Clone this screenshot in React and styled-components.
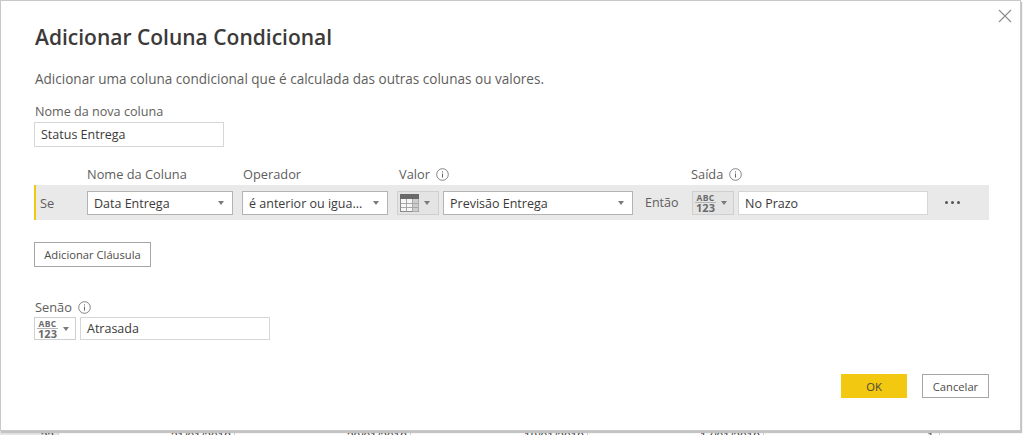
import React from "react";
import styled, { createGlobalStyle } from "styled-components";

const Global = createGlobalStyle`
  html, body { margin: 0; padding: 0; background: #fff; }
  body { width: 1024px; height: 435px; overflow: hidden; font-family: "Open Sans", "Noto Sans", sans-serif; color: #605e5c; }
`;
const Page = styled.div`
  width: 1024px; height: 435px; overflow: hidden; background: #fff;
`;
const Dialog = styled.div`
  position: relative; z-index: 1;
  box-sizing: border-box;
  width: 1021px; height: 431px;
  background: #fff;
  border: 1px solid #c8c8c8;
  padding: 22px 33px 0;
  box-shadow: 1px 2px 1px #c4c4c4;
`;
const Close = styled.button`
  position: absolute; top: 8px; right: 8px;
  width: 14px; height: 14px; padding: 0; border: 0; background: none; display: block;
  svg { display: block; }
`;
const Title = styled.h1`
  margin: 0; padding-left: 1px; font-size: 21px; line-height: 28px; font-weight: 600; color: #3b3a39;
`;
const Desc = styled.p`
  margin: 18px 0 0; padding-left: 1px; font-size: 13.55px; line-height: 20px; color: #605e5c;
`;
const Label = styled.div`
  display: flex; align-items: center; gap: 6px;
  font-size: 12.8px; line-height: 18px; color: #605e5c;
`;
const NameLabel = styled(Label)`margin: 14px 0 1px; padding-left: 1px; font-size: 12.6px;`;
const TextBox = styled.div`
  box-sizing: border-box;
  width: ${p => p.$w}px; height: ${p => p.$h || 25}px;
  background: #fff; border: 1px solid #d6d6d6;
  padding: ${p => p.$drop || 0}px 6px 0; display: flex; align-items: center;
  font-size: 12.5px; color: #3b3a39; white-space: nowrap;
`;
const Columns = styled.div`
  display: flex; margin-top: 17px; padding-left: 53px; height: 20px; align-items: center;
`;
const Col = styled(Label)`width: ${p => p.$w}px; flex: none;`;
const Row = styled.div`
  display: flex; align-items: center;
  box-sizing: border-box;
  width: 955px; height: 35px; margin-top: 1px;
  background: #e9e9e9; border-left: 2px solid #f2c811;
`;
const Se = styled.span`
  width: 51px; flex: none; padding-left: 4px; box-sizing: border-box;
  font-size: 12.8px; color: #605e5c;
`;
const Select = styled.div`
  box-sizing: border-box; flex: none;
  width: ${p => p.$w}px; height: 24px; margin-right: ${p => p.$mr ?? 9}px;
  background: #fff; border: 1px solid #b3b3b3;
  display: flex; align-items: center; justify-content: space-between;
  padding: 1px 8px 0 6px;
  font-size: 12.5px; color: #3b3a39; white-space: nowrap;
`;
const Caret = styled.i`
  display: block; flex: none; width: 0; height: 0;
  border-left: 3.5px solid transparent; border-right: 3.5px solid transparent;
  border-top: 4px solid #7a7a7a;
`;
const TypeButton = styled.div`
  box-sizing: border-box; flex: none;
  width: 42px; height: ${p => p.$h || 24}px; margin-right: 4px;
  background: ${p => p.$bg || "#e4e4e4"}; border: 1px solid #cfcfcf;
  display: flex; align-items: center; gap: 5px; padding-left: 2px;
`;
const Abc = styled.span`
  display: block; width: 21px; font-family: "Open Sans", sans-serif;
  color: #6a6a6a; text-align: center;
  b { display: block; font-weight: 700; font-size: 8.5px; line-height: 9px; letter-spacing: .3px; }
  b + b { font-size: 11px; line-height: 10px; letter-spacing: 0; border-top: 1px solid #b5b5b5; }
`;
const Then = styled.span`
  width: 47px; flex: none; margin-left: 12px; box-sizing: border-box;
  font-size: 12.5px; color: #605e5c;
`;
const More = styled.span`
  margin-left: 17px; display: flex; gap: 3px;
  i { display: block; width: 3px; height: 3px; border-radius: 50%; background: #555; }
`;
const Button = styled.div`
  box-sizing: border-box; width: ${p => p.$w}px; height: ${p => p.$h}px;
  display: flex; align-items: center; justify-content: center;
  background: ${p => p.$primary ? "#f2c811" : "#fff"};
  border: 1px solid ${p => p.$primary ? "#f2c811" : "#a6a6a6"};
  font-size: 11.2px; color: ${p => p.$primary ? "#4a4538" : "#4d4b49"};
`;
const AddButton = styled(Button)`margin-top: 22px;`;
const ElseLabel = styled(Label)`margin-top: 31px; padding-left: 1px;`;
const ElseRow = styled.div`display: flex; align-items: center; margin-top: 1px;`;
const Footer = styled.div`
  position: absolute; right: 31px; bottom: 32px;
  display: flex; gap: 15px;
`;
const Behind = styled.div`
  display: flex; height: 4px; overflow: hidden; background: #fff;
`;
const Cell = styled.div`
  box-sizing: border-box; flex: none; width: ${p => p.$w}px; height: 4px;
  padding-right: ${p => p.$pad ?? 3}px; text-align: right;
  border-right: 1px solid #cfcfcf;
  background: ${p => p.$head ? "#e6e6e6" : "#fff"};
  font-family: "Liberation Sans", sans-serif; font-size: 12px; line-height: 16px; color: #333;
  span { display: block; margin-top: -2px; }
`;

const Info = () => (
  <svg width="13" height="13" viewBox="0 0 13 13" fill="none" stroke="#666">
    <circle cx="6.5" cy="6.5" r="5.8" strokeWidth=".8" />
    <path d="M6.5 5.6V9.6M6.5 3.4v1.1" strokeWidth="1" />
  </svg>
);
const TableIcon = () => (
  <svg width="19" height="18" viewBox="0 0 19 18">
    <rect x=".5" y=".5" width="18" height="17" fill="#f6f6f6" stroke="#8a8a8a" />
    <rect x="13" y="5" width="5.5" height="12.5" fill="#cdcdcd" />
    <rect x="0" y="0" width="19" height="5" fill="#6a6a6a" />
    <path d="M6.5 5V17.5M12.5 5V17.5M1 9.5H18M1 13.5H18" stroke="#a8a8a8" fill="none" />
  </svg>
);
const AbcIcon = () => <Abc><b>ABC</b><b>123</b></Abc>;

const rows = [
  ["22", 59, true, 4],
  ["31/01/2019", 176],
  ["30/01/2019", 176],
  ["18/01/2019", 177],
  ["17/01/2019", 176],
  ["1", 176, false, 5],
];

export default function App() {
  return (
    <Page>
      <Global />
      <Dialog>
        <Close aria-label="Fechar">
          <svg width="14" height="14" viewBox="0 0 14 14" stroke="#8c8c8c" strokeWidth="1.1" fill="none">
            <path d="M1 1L13 13M13 1L1 13" />
          </svg>
        </Close>
        <Title>Adicionar Coluna Condicional</Title>
        <Desc>Adicionar uma coluna condicional que é calculada das outras colunas ou valores.</Desc>
        <NameLabel>Nome da nova coluna</NameLabel>
        <TextBox $w={190}>Status Entrega</TextBox>
        <Columns>
          <Col $w={156}>Nome da Coluna</Col>
          <Col $w={156}>Operador</Col>
          <Col $w={292}>Valor <Info /></Col>
          <Col $w={200}>Saída <Info /></Col>
        </Columns>
        <Row>
          <Se>Se</Se>
          <Select $w={146}>Data Entrega<Caret /></Select>
          <Select $w={146}>é anterior ou igua...<Caret /></Select>
          <TypeButton><TableIcon /><Caret /></TypeButton>
          <Select $w={190} $mr={0}>Previsão Entrega<Caret /></Select>
          <Then>Então</Then>
          <TypeButton><AbcIcon /><Caret /></TypeButton>
          <TextBox $w={190} $h={24} $drop={1}>No Prazo</TextBox>
          <More><i /><i /><i /></More>
        </Row>
        <AddButton $w={117} $h={25}>Adicionar Cláusula</AddButton>
        <ElseLabel>Senão <Info /></ElseLabel>
        <ElseRow>
          <TypeButton $bg="#fff" $h={23}><AbcIcon /><Caret /></TypeButton>
          <TextBox $w={190} $h={23}>Atrasada</TextBox>
        </ElseRow>
        <Footer>
          <Button $primary $w={66} $h={24}>OK</Button>
          <Button $w={67} $h={24}>Cancelar</Button>
        </Footer>
      </Dialog>
      <Behind>
        {rows.map(([text, w, head, pad]) => (
          <Cell key={text} $w={w} $head={head} $pad={pad}><span>{text}</span></Cell>
        ))}
      </Behind>
    </Page>
  );
}
